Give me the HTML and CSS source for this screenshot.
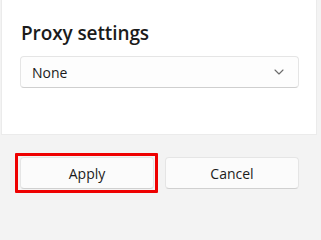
FILE: index.html
```html
<!DOCTYPE html>
<html>
<head>
<meta charset="utf-8">
<link rel="stylesheet" href="styles.css">
</head>
<body>
<div class="panel">
  <h1 class="title">Proxy settings</h1>
  <div class="select">
    <span class="select-value">None</span>
    <svg class="chevron" width="10" height="6" viewBox="0 0 10 6"><path d="M1 1 L5 5 L9 1" fill="none" stroke="#6b6b6b" stroke-width="1.1" stroke-linecap="round" stroke-linejoin="round"/></svg>
  </div>
</div>
<div class="footer">
  <div class="highlight">
    <button class="btn">Apply</button>
  </div>
  <button class="btn btn-plain">Cancel</button>
</div>
</body>
</html>
```
FILE: styles.css
```css
html, body {
  margin: 0;
  padding: 0;
  background: #f3f3f3;
  font-family: "Open Sans", "Noto Sans", sans-serif;
  color: #1b1b1b;
}
.panel {
  margin: 0 4px 0 1px;
  background: #ffffff;
  border: 1px solid #ebebeb;
  border-top: none;
  padding: 19px 17px 46px 18px;
}
.title {
  margin: 0 0 9px 1px;
  font-size: 19px;
  font-weight: 600;
  line-height: 28px;
  color: #1b1b1b;
  letter-spacing: -0.1px;
}
.select {
  height: 30px;
  border: 1px solid #e5e5e5;
  border-bottom-color: #cfcfcf;
  border-radius: 4px;
  background: #fdfdfd;
  display: flex;
  align-items: center;
  justify-content: space-between;
  padding: 0 14px 0 11px;
}
.select-value {
  font-size: 14px;
  color: #1b1b1b;
}
.chevron {
  display: block;
}
.footer {
  display: grid;
  grid-template-columns: 143px 1fr;
  column-gap: 7px;
  padding: 18px 22px 8px 15px;
  align-items: start;
}
.highlight {
  padding: 1px 1px 1px 2px;
  border: 3px solid #ee0000;
  border-radius: 1px;
  display: flex;
}
.highlight .btn {
  flex: 1;
}
.btn {
  height: 32px;
  border: 1px solid #e5e5e5;
  border-bottom-color: #d0d0d0;
  border-radius: 4px;
  background: #fbfbfb;
  font-family: "Open Sans", "Noto Sans", sans-serif;
  font-size: 14px;
  color: #1b1b1b;
  padding: 0;
}
.btn-plain {
  margin-top: 4px;
}
```
